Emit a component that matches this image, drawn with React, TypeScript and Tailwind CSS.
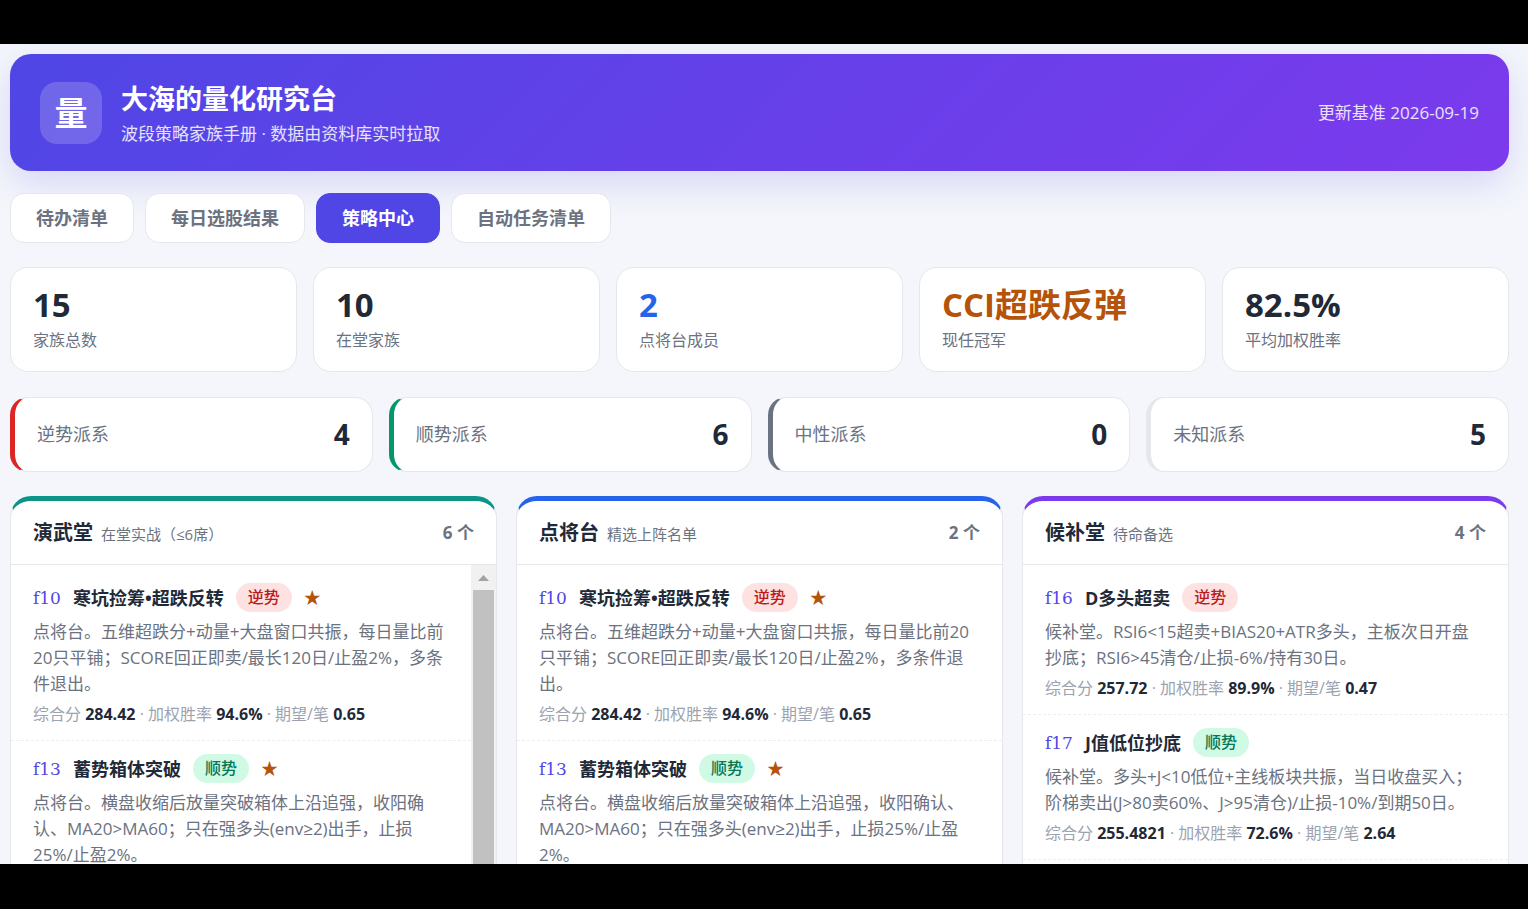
import { useState } from "react";
import clsx from "clsx";

// ===========================
// Types
// ===========================

type Trend = "逆势" | "顺势";

interface Family {
  code: string;
  name: string;
  trend: Trend;
  starred?: boolean;
  desc: string;
  score?: string;
  winRate?: string;
  expectation?: string;
}

interface Hall {
  title: string;
  subtitle: string;
  count: number;
  accent: string;
  scrollable?: boolean;
  families: Family[];
}

// ===========================
// Data
// ===========================

const TABS = ["待办清单", "每日选股结果", "策略中心", "自动任务清单"];

const STATS = [
  { value: "15", label: "家族总数", color: "text-[#1f2937]" },
  { value: "10", label: "在堂家族", color: "text-[#1f2937]" },
  { value: "2", label: "点将台成员", color: "text-[#2563eb]" },
  { value: "CCI超跌反弹", label: "现任冠军", color: "text-[#b45309]" },
  { value: "82.5%", label: "平均加权胜率", color: "text-[#1f2937]" },
];

const FACTIONS = [
  { label: "逆势派系", count: 4, border: "border-l-[#dc2626]" },
  { label: "顺势派系", count: 6, border: "border-l-[#059669]" },
  { label: "中性派系", count: 0, border: "border-l-[#6b7280]" },
  { label: "未知派系", count: 5, border: "border-l-[#e5e7eb]" },
];

const F10: Family = {
  code: "f10",
  name: "寒坑捡筹•超跌反转",
  trend: "逆势",
  starred: true,
  desc: "点将台。五维超跌分+动量+大盘窗口共振，每日量比前20只平铺；SCORE回正即卖/最长120日/止盈2%，多条件退出。",
  score: "284.42",
  winRate: "94.6%",
  expectation: "0.65",
};

const F13: Family = {
  code: "f13",
  name: "蓄势箱体突破",
  trend: "顺势",
  starred: true,
  desc: "点将台。横盘收缩后放量突破箱体上沿追强，收阳确认、MA20>MA60；只在强多头(env≥2)出手，止损25%/止盈2%。",
};

const HALLS: Hall[] = [
  {
    title: "演武堂",
    subtitle: "在堂实战（≤6席）",
    count: 6,
    accent: "border-t-[#0d9488]",
    scrollable: true,
    families: [F10, F13],
  },
  {
    title: "点将台",
    subtitle: "精选上阵名单",
    count: 2,
    accent: "border-t-[#2563eb]",
    families: [F10, F13],
  },
  {
    title: "候补堂",
    subtitle: "待命备选",
    count: 4,
    accent: "border-t-[#7c3aed]",
    families: [
      {
        code: "f16",
        name: "D多头超卖",
        trend: "逆势",
        desc: "候补堂。RSI6<15超卖+BIAS20+ATR多头，主板次日开盘抄底；RSI6>45清仓/止损-6%/持有30日。",
        score: "257.72",
        winRate: "89.9%",
        expectation: "0.47",
      },
      {
        code: "f17",
        name: "J值低位抄底",
        trend: "顺势",
        desc: "候补堂。多头+J<10低位+主线板块共振，当日收盘买入；阶梯卖出(J>80卖60%、J>95清仓)/止损-10%/到期50日。",
        score: "255.4821",
        winRate: "72.6%",
        expectation: "2.64",
      },
    ],
  },
];

// ===========================
// Components
// ===========================

function PageHeader() {
  return (
    <header className="flex shrink-0 items-center gap-[19px] rounded-[21px] bg-[linear-gradient(135deg,#4f46e5_0%,#7c3aed_100%)] px-[30px] py-[25px] text-white shadow-[0_12px_36px_rgba(79,70,229,0.18)]">
      <div className="flex size-[62px] items-center justify-center rounded-[17px] bg-white/18 text-[33px] leading-none font-bold">
        量
      </div>
      <div className="flex-1">
        <h1 className="text-[27px] leading-[40px] font-bold">大海的量化研究台</h1>
        <p className="mt-[3px] text-[17px] leading-6 text-white/85">
          波段策略家族手册 · 数据由资料库实时拉取
        </p>
      </div>
      <p className="text-[17px] leading-6 text-white/85">更新基准 2026-09-19</p>
    </header>
  );
}

function TabBar() {
  const [active, setActive] = useState("策略中心");

  return (
    <nav className="mt-[22px] flex gap-[11px]">
      {TABS.map((tab) => (
        <button
          key={tab}
          type="button"
          onClick={() => setActive(tab)}
          className={clsx(
            "h-[50px] cursor-pointer rounded-[14px] border px-[25px] text-[18px] leading-6 font-bold",
            tab === active
              ? "border-[#4f46e5] bg-[#4f46e5] text-white"
              : "border-[#e5e7eb] bg-white text-[#6b7280]",
          )}
        >
          {tab}
        </button>
      ))}
    </nav>
  );
}

function StatCards() {
  return (
    <section className="mt-6 grid grid-cols-5 gap-4">
      {STATS.map((stat) => (
        <div
          key={stat.label}
          className="rounded-[18px] border border-[#e5e7eb] bg-white px-[22px] pt-[18px] pb-[19px]"
        >
          <div className={clsx("text-[33px] leading-[38px] font-bold", stat.color)}>
            {stat.value}
          </div>
          <div className="mt-1 text-[16px] leading-6 text-[#6b7280]">{stat.label}</div>
        </div>
      ))}
    </section>
  );
}

function FactionCards() {
  return (
    <section className="mt-[25px] grid grid-cols-4 gap-4">
      {FACTIONS.map((faction) => (
        <div
          key={faction.label}
          className={clsx(
            "flex items-center justify-between rounded-[18px] border border-l-[5px] border-[#e5e7eb] bg-white px-[22px] pt-5 pb-[21px]",
            faction.border,
          )}
        >
          <span className="text-[18px] leading-6 text-[#6b7280]">{faction.label}</span>
          <span className="text-[28px] leading-8 font-bold text-[#1f2937]">
            {faction.count}
          </span>
        </div>
      ))}
    </section>
  );
}

function TrendBadge({ trend }: { trend: Trend }) {
  return (
    <span
      className={clsx(
        "rounded-full px-3 text-[16px] leading-[29px] font-medium",
        trend === "逆势" ? "bg-[#fee2e2] text-[#b91c1c]" : "bg-[#d1fae5] text-[#047857]",
      )}
    >
      {trend}
    </span>
  );
}

function FamilyItem({ family }: { family: Family }) {
  return (
    <li className="border-b border-dashed border-[#eceef2] px-[22px] pt-[13px] pb-[14px]">
      <div className="flex items-center gap-3">
        <span className="min-w-7 font-['DejaVu_Serif',serif] text-[17px] leading-6 text-[#4f46e5]">
          {family.code}
        </span>
        <h3 className="text-[18px] leading-6 font-bold text-[#1f2937]">{family.name}</h3>
        <TrendBadge trend={family.trend} />
        {family.starred && (
          <span className="text-[17px] leading-6 text-[#b45309]">★</span>
        )}
      </div>
      <p className="mt-[7px] pr-1 text-[17px] leading-[26px] text-[#6b7280]">
        {family.desc}
      </p>
      {family.score && (
        <p className="mt-[5px] text-[16px] leading-6 text-[#9ca3af]">
          综合分 <b className="text-[#1f2937]">{family.score}</b> · 加权胜率{" "}
          <b className="text-[#1f2937]">{family.winRate}</b> · 期望/笔{" "}
          <b className="text-[#1f2937]">{family.expectation}</b>
        </p>
      )}
    </li>
  );
}

function ScrollTrack() {
  return (
    <div className="flex w-[25px] shrink-0 flex-col bg-[#f1f1f1]" aria-hidden="true">
      <svg className="h-[25px] w-full shrink-0" viewBox="0 0 25 25">
        <path d="M12.5 10L18 16H7z" fill="#a3a3a3" />
      </svg>
      <div className="mx-[2px] flex-1 bg-[#c1c1c1]" />
    </div>
  );
}

function HallColumn({ hall }: { hall: Hall }) {
  return (
    <section
      className={clsx(
        "flex min-h-0 flex-col overflow-hidden rounded-t-[21px] border border-t-[5px] border-b-0 border-[#e5e7eb] bg-white",
        hall.accent,
      )}
    >
      <div className="flex h-16 shrink-0 items-center justify-between border-b border-[#e5e7eb] px-[22px]">
        <h2 className="flex items-baseline gap-2">
          <span className="text-[20px] leading-7 font-bold text-[#1f2937]">
            {hall.title}
          </span>
          <span className="text-[15px] leading-6 text-[#6b7280]">{hall.subtitle}</span>
        </h2>
        <span className="text-[17px] leading-6 font-bold text-[#6b7280]">
          {hall.count} 个
        </span>
      </div>
      <div className="flex min-h-0 flex-1">
        <ul className="min-w-0 flex-1 pt-[5px]">
          {hall.families.map((family) => (
            <FamilyItem key={family.code} family={family} />
          ))}
        </ul>
        {hall.scrollable && <ScrollTrack />}
      </div>
    </section>
  );
}

function App() {
  return (
    <div
      lang="zh-CN"
      className="flex h-screen flex-col bg-black pt-11 pb-[45px] font-['Open_Sans','Noto_Sans_CJK_SC',sans-serif]"
    >
      <main className="flex min-h-0 flex-1 flex-col overflow-hidden bg-[#f4f6fb] pt-[10px] pr-[19px] pl-[10px]">
        <PageHeader />
        <TabBar />
        <StatCards />
        <FactionCards />
        <div className="mt-6 grid min-h-0 flex-1 grid-cols-3 grid-rows-[minmax(0,1fr)] gap-[19px]">
          {HALLS.map((hall) => (
            <HallColumn key={hall.title} hall={hall} />
          ))}
        </div>
      </main>
    </div>
  );
}

export default App;
